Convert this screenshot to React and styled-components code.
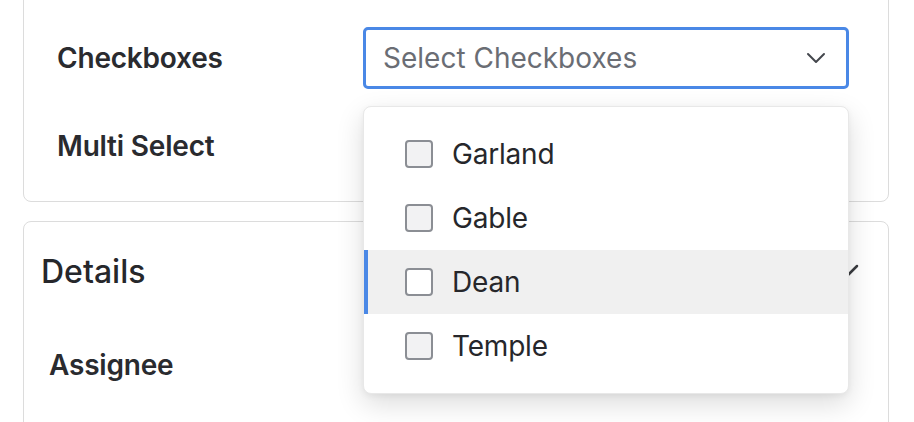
import styled, { createGlobalStyle } from "styled-components";
import { ChevronDown } from "lucide-react";

const GlobalStyle = createGlobalStyle`
  html, body {
    margin: 0;
    padding: 0;
    background: #ffffff;
    overflow: hidden;
  }
  body {
    font-family: Inter, "Noto Sans", sans-serif;
    color: #26272b;
  }
`;

const Page = styled.div`
  padding: 0 25px 0 23px;
`;

const Card = styled.section`
  border: 1.5px solid #dcdcdc;
  border-radius: 8px;
  background: #fff;
`;

const FieldsCard = styled(Card)`
  margin-top: -20px;
  padding: 46px 39px 24px 33px;
  display: grid;
  grid-template-columns: 306px 1fr;
  row-gap: 26px;
  align-items: center;
`;

const Label = styled.label`
  font-size: 28px;
  font-weight: 600;
  color: #2a2b2f;
  letter-spacing: -0.2px;
`;

const SelectWrap = styled.div`
  position: relative;
`;

const SelectBox = styled.div`
  box-sizing: border-box;
  height: 62px;
  border: ${(p) => (p.$focused ? "3px solid #4a88e6" : "1.5px solid #d4d4d8")};
  border-radius: 5px;
  display: flex;
  align-items: center;
  justify-content: space-between;
  padding: 0 14px 0 ${(p) => (p.$focused ? "17px" : "18px")};
  background: #fff;
`;

const Placeholder = styled.span`
  font-size: 28px;
  color: #6a6d74;
`;

const Menu = styled.ul`
  position: absolute;
  top: calc(100% + 17px);
  left: 0;
  right: 0;
  margin: 0;
  padding: 15px 0 15px;
  list-style: none;
  background: #fff;
  border: 1px solid #e8e8e8;
  border-radius: 8px;
  box-shadow: 0 10px 28px rgba(0, 0, 0, 0.14), 0 2px 6px rgba(0, 0, 0, 0.05);
  z-index: 10;
  overflow: hidden;
`;

const Option = styled.li`
  height: 64px;
  display: flex;
  align-items: center;
  gap: 19px;
  padding-left: 41px;
  background: ${(p) => (p.$active ? "#f0f0f0" : "transparent")};
  box-shadow: ${(p) => (p.$active ? "inset 4px 0 0 #4a88e6" : "none")};
`;

const Box = styled.span`
  box-sizing: border-box;
  width: 28px;
  height: 28px;
  border: 2px solid #8b8e94;
  border-radius: 4px;
  background: ${(p) => (p.$active ? "#ffffff" : "#f2f2f3")};
`;

const OptionText = styled.span`
  font-size: 28px;
  color: #26272b;
  letter-spacing: -0.2px;
`;

const DetailsCard = styled(Card)`
  margin-top: 19px;
  padding: 28px 21px 80px 17px;
`;

const DetailsHeader = styled.div`
  display: flex;
  align-items: center;
  justify-content: space-between;
  height: 42px;
`;

const Title = styled.h2`
  margin: 0;
  font-size: 32px;
  font-weight: 500;
  color: #26272b;
`;

const DetailsRow = styled.div`
  margin-top: 56px;
  padding-left: 8px;
`;

const options = ["Garland", "Gable", "Dean", "Temple"];

export default function App() {
  return (
    <Page>
      <GlobalStyle />
      <FieldsCard>
        <Label>Checkboxes</Label>
        <SelectWrap>
          <SelectBox $focused>
            <Placeholder>Select Checkboxes</Placeholder>
            <ChevronDown size={32} strokeWidth={1.5} color="#44474d" />
          </SelectBox>
          <Menu>
            {options.map((o) => (
              <Option key={o} $active={o === "Dean"}>
                <Box $active={o === "Dean"} />
                <OptionText>{o}</OptionText>
              </Option>
            ))}
          </Menu>
        </SelectWrap>
        <Label>Multi Select</Label>
        <SelectBox>
          <span />
          <ChevronDown size={32} strokeWidth={1.5} color="#44474d" />
        </SelectBox>
      </FieldsCard>
      <DetailsCard>
        <DetailsHeader>
          <Title>Details</Title>
          <ChevronDown size={40} strokeWidth={1.5} color="#3a3c40" />
        </DetailsHeader>
        <DetailsRow>
          <Label>Assignee</Label>
        </DetailsRow>
      </DetailsCard>
    </Page>
  );
}
